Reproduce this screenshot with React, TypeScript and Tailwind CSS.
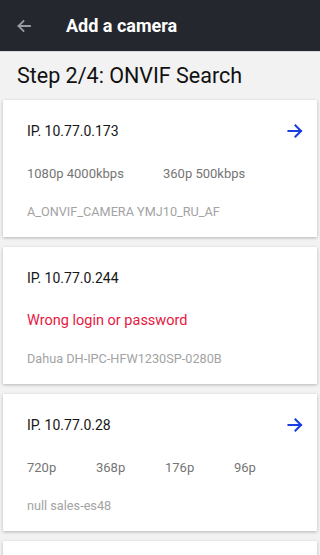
import React from "react";

function Arrow() {
  return (
    <svg width="16" height="16" viewBox="0 0 16 16" fill="none" stroke="#1a3ee0" strokeWidth="2.1" strokeLinecap="square">
      <path d="M1.5 8h12.5M8.5 2.5L14 8l-5.5 5.5" />
    </svg>
  );
}

type Cam = {
  ip: string;
  specs?: { label: string; w: string }[];
  error?: string;
  model: string;
  arrow: boolean;
};

const cams: Cam[] = [
  {
    ip: "IP. 10.77.0.173",
    specs: [
      { label: "1080p 4000kbps", w: "w-[136px]" },
      { label: "360p 500kbps", w: "w-[100px]" },
    ],
    model: "A_ONVIF_CAMERA YMJ10_RU_AF",
    arrow: true,
  },
  {
    ip: "IP. 10.77.0.244",
    error: "Wrong login or password",
    model: "Dahua DH-IPC-HFW1230SP-0280B",
    arrow: false,
  },
  {
    ip: "IP. 10.77.0.28",
    specs: [
      { label: "720p", w: "w-[70px]" },
      { label: "368p", w: "w-[70px]" },
      { label: "176p", w: "w-[70px]" },
      { label: "96p", w: "w-[70px]" },
    ],
    model: "null sales-es48",
    arrow: true,
  },
];

function Card({ c }: { c: Cam }) {
  return (
    <div className="bg-white h-[137px] shadow-[0_1px_3px_rgba(0,0,0,0.25)] pl-[24px] pr-[14px] flex flex-col shrink-0">
      <div className="flex items-center justify-between h-[20px] mt-[21px]">
        <span className="text-[14px] text-[#161616]">{c.ip}</span>
        {c.arrow && <Arrow />}
      </div>
      {c.specs ? (
        <div className="flex items-center h-[20px] mt-[23px] text-[13px] text-[#757575]">
          {c.specs.map((s) => (
            <span key={s.label} className={s.w}>{s.label}</span>
          ))}
        </div>
      ) : (
        <div className="flex items-center h-[20px] mt-[23px] text-[14.5px] text-[#e8173f]">{c.error}</div>
      )}
      <div className="flex items-center h-[18px] mt-[19px] text-[12.7px] text-[#a3a3a3]">{c.model}</div>
    </div>
  );
}

export default function App() {
  return (
    <div className="w-[320px] h-[555px] overflow-hidden bg-[#f2f2f2] flex flex-col" style={{ fontFamily: "Roboto, 'Noto Sans', sans-serif" }}>
      <div className="h-[51px] bg-[#25272e] flex items-center shrink-0">
        <div className="w-[66px] flex items-center pl-[16px]">
          <svg width="16" height="16" viewBox="0 0 16 16" fill="none" stroke="#9a9ca3" strokeWidth="1.8" strokeLinecap="square">
            <path d="M14 8H2.5M7.5 3L2.5 8l5 5" />
          </svg>
        </div>
        <span className="text-white font-bold text-[18px]">Add a camera</span>
      </div>
      <div className="h-[1px] bg-[#d8d8d8] shrink-0" />
      <div className="h-[48px] flex items-center pl-[17px] shrink-0">
        <span className="text-[21.5px] text-[#111]">Step 2/4: ONVIF Search</span>
      </div>
      <div className="flex flex-col gap-[10px] pl-[3px] pr-[3px]">
        {cams.map((c) => (
          <Card key={c.ip} c={c} />
        ))}
        <div className="bg-white h-[137px] shadow-[0_1px_3px_rgba(0,0,0,0.25)] shrink-0" />
      </div>
    </div>
  );
}
